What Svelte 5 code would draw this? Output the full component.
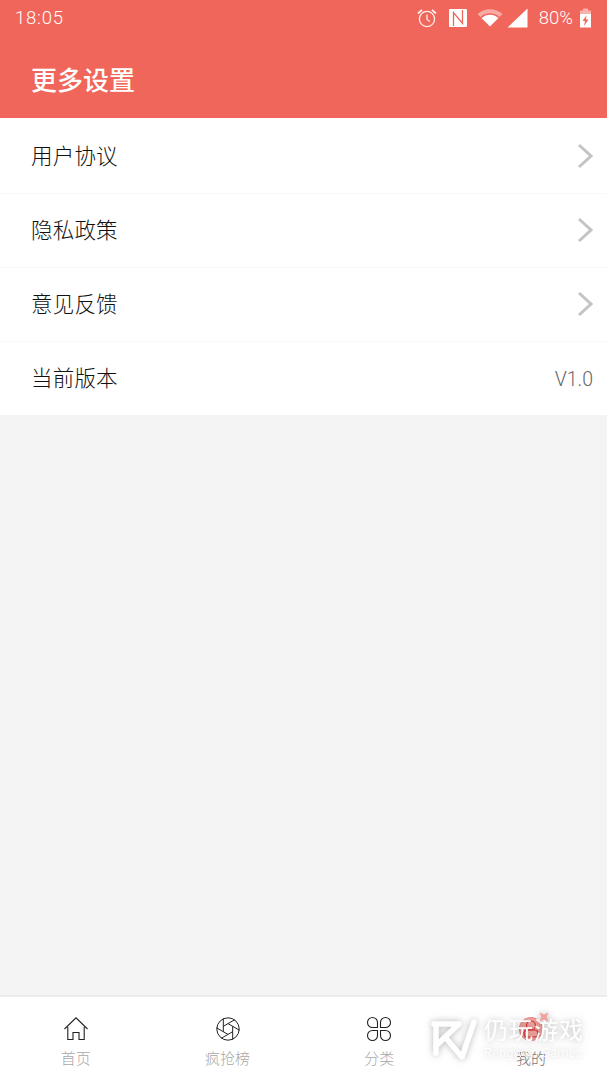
<script>
  const rows = [
    { label: '用户协议', arrow: true },
    { label: '隐私政策', arrow: true },
    { label: '意见反馈', arrow: true },
    { label: '当前版本', value: 'V1.0' }
  ]

  // aperture blades: each hexagon side carried on until it meets the outer ring
  const blades = [0, 1, 2, 3, 4, 5].map(i => {
    const a = (i * Math.PI) / 3 + Math.PI / 6
    const b = ((i + 1) * Math.PI) / 3 + Math.PI / 6
    const x1 = 13 + 5.4 * Math.cos(a)
    const y1 = 13 + 5.4 * Math.sin(a)
    const x2 = 13 + 5.4 * Math.cos(b)
    const y2 = 13 + 5.4 * Math.sin(b)
    const dx = (x2 - x1) / 5.4
    const dy = (y2 - y1) / 5.4
    return `M${x1.toFixed(2)} ${y1.toFixed(2)}L${(x1 + dx * 13.3).toFixed(2)} ${(y1 + dy * 13.3).toFixed(2)}`
  }).join('')
</script>

<div class="page">
  <header class="header">
    <div class="status">
      <span class="time">18:05</span>
      <div class="status-right">
        <svg class="alarm" width="22" height="22" viewBox="0 0 22 22" fill="none" stroke="#fff" stroke-width="1.3" opacity="0.9">
          <circle cx="11" cy="12" r="7.6" />
          <path d="M11 7.500V12.500L14 14.500" />
          <path d="M2 6.500L6 2.800M20 6.500L16 2.800" stroke-width="1.800" />
        </svg>
        <svg class="nfc" width="20" height="20" viewBox="0 0 20 20">
          <rect x="1" y="1" width="18" height="18" rx="1" fill="#fff" />
          <path d="M5.500 18V4.500L14.500 15.500V2" fill="none" stroke="#f0665a" stroke-width="1.300" />
        </svg>
        <svg class="wifi" width="26" height="20" viewBox="0 0 26 20">
          <path fill="#fff" opacity="0.45" d="M0.500 6C7.500 -0.500 18.500 -0.500 25.500 6L22.500 9C17 4 9 4 3.500 9Z" />
          <path fill="#fff" d="M4.500 10C9.500 5.500 16.500 5.500 21.500 10L13 18.500Z" />
        </svg>
        <svg class="signal" width="21" height="20" viewBox="0 0 21 20">
          <path fill="#fff" d="M20.500 0.500V19.500H0.500Z" />
        </svg>
        <span class="battery-text">80%</span>
        <svg class="battery" width="13" height="20" viewBox="0 0 13 20">
          <path fill="#fff" opacity="0.5" d="M4 0.500H9V2.500H12V6H1V2.500H4Z" />
          <path fill="#fff" d="M1 6H12V19.500H1ZM7.500 7.500L3.500 13H6L5 18L9.500 11.500H7Z" fill-rule="evenodd" />
        </svg>
      </div>
    </div>
    <h1 class="title">更多设置</h1>
  </header>

  <ul class="list">
    {#each rows as row}
      <li class="row">
        <span class="label">{row.label}</span>
        {#if row.arrow}
          <svg class="chevron" width="16" height="26" viewBox="0 0 16 26" fill="none" stroke="#c4c4c4" stroke-width="3">
            <path d="M2 2L14 13L2 24" />
          </svg>
        {:else}
          <span class="value">{row.value}</span>
        {/if}
      </li>
    {/each}
  </ul>

  <div class="spacer"></div>

  <nav class="tabbar">
    <div class="tab">
      <svg width="26" height="26" viewBox="0 0 26 26" fill="none" stroke="#222" stroke-width="1.100">
        <path d="M1.500 13L13 1.800L24.500 13M4.800 11V23.500H10V16.500H16V23.500H21.200V11" />
      </svg>
      <span>首页</span>
    </div>
    <div class="tab">
      <svg width="26" height="26" viewBox="0 0 26 26" fill="none" stroke="#222" stroke-width="1">
        <circle cx="13" cy="13" r="11.200" />
        <path d={blades} />
      </svg>
      <span>疯抢榜</span>
    </div>
    <div class="tab">
      <svg width="26" height="26" viewBox="0 0 26 26" fill="none" stroke="#222" stroke-width="1.100">
        <path d="M11.500 11.500H6.500A5 5 0 1 1 11.500 6.500ZM14.500 11.500H19.500A5 5 0 1 0 14.500 6.500ZM11.500 14.500H6.500A5 5 0 1 0 11.500 19.500ZM14.500 14.500H19.500A5 5 0 1 1 14.500 19.500Z" />
      </svg>
      <span>分类</span>
    </div>
    <div class="tab">
      <svg width="26" height="26" viewBox="0 0 26 26" fill="none" stroke="#d92f2f" stroke-width="1.200">
        <circle cx="13" cy="13" r="11.500" fill="#f2a5a1" stroke="#ec8f8a" />
        <circle cx="13" cy="9.500" r="4.500" />
        <rect x="6" y="14" width="14" height="7" rx="3.500" />
      </svg>
      <span class="me">我的</span>
    </div>
  </nav>

  <div class="watermark">
    <svg class="wm-logo" width="47" height="45" viewBox="0 0 47 45" fill="none" stroke="#fff" stroke-width="5.500" stroke-linejoin="round" stroke-linecap="round">
      <path d="M3 7H28L14 20L5 29V7" />
      <path d="M5 29V36" />
      <path d="M14 20L31 40L43 5" />
    </svg>
    <div class="wm-text">
      <span class="wm-cn">仍玩游戏</span>
      <span class="wm-en">Rengwan Games</span>
    </div>
    <svg class="wm-star" width="12" height="12" viewBox="0 0 16 16">
      <path fill="#f2a29d" d="M2 2L8 4.500L14 2L11.500 8L14 14L8 11.500L2 14L4.500 8Z" />
    </svg>
  </div>
</div>

<style>
  :global(body) {
    margin: 0;
    background: #f4f4f4;
  }

  .page {
    position: relative;
    display: flex;
    flex-direction: column;
    height: 1080px;
    font-family: "Noto Sans CJK SC", "Noto Sans", sans-serif;
    overflow: hidden;
  }

  .header {
    height: 118px;
    background: #f0665a;
    color: #fff;
    flex-shrink: 0;
  }

  .status {
    display: flex;
    align-items: center;
    justify-content: space-between;
    height: 36px;
    padding: 0 15px;
  }

  .time {
    font-family: Roboto, "Noto Sans", sans-serif;
    font-size: 18.500px;
    font-weight: 300;
    letter-spacing: 0.8px;
  }

  .status-right {
    display: flex;
    align-items: center;
  }

  .status-right svg {
    display: block;
  }

  .nfc {
    margin-left: 10px;
  }

  .wifi {
    margin-left: 9px;
  }

  .signal {
    margin-left: 4px;
  }

  .battery-text {
    margin-left: 11px;
    font-family: Roboto, "Noto Sans", sans-serif;
    font-size: 18.500px;
    font-weight: 300;
  }

  .battery {
    margin-left: 6px;
  }

  .title {
    margin: 0;
    padding: 25px 0 0 31px;
    font-size: 26px;
    font-weight: 500;
    line-height: 36px;
  }

  .list {
    list-style: none;
    margin: 0;
    padding: 1px 0 0;
    background: #fff;
    flex-shrink: 0;
  }

  .row {
    display: flex;
    align-items: center;
    justify-content: space-between;
    height: 74px;
    padding: 0 14px 0 31px;
    box-sizing: border-box;
  }

  .row + .row {
    border-top: 1px solid #f8f8f8;
  }

  .label {
    font-size: 21.500px;
    font-weight: 300;
    color: #111;
    letter-spacing: 0.2px;
    padding-bottom: 4px;
  }

  .value {
    font-family: Roboto, "Noto Sans", sans-serif;
    font-size: 19.500px;
    font-weight: 300;
    color: #666;
    padding-top: 2px;
  }

  .chevron {
    margin-top: -1px;
  }

  .spacer {
    flex: 1;
  }

  .tabbar {
    display: grid;
    grid-template-columns: repeat(4, 1fr);
    height: 83px;
    background: #fff;
    border-top: 2px solid #ececec;
    flex-shrink: 0;
  }

  .tab {
    display: flex;
    flex-direction: column;
    align-items: center;
    padding-top: 19px;
    color: #a8a8a8;
    font-size: 15px;
    font-weight: 300;
    line-height: 22px;
  }

  .tab svg {
    display: block;
    margin-bottom: 5px;
  }

  .me {
    color: #777;
  }

  .watermark {
    position: absolute;
    left: 431px;
    top: 1014px;
    display: flex;
    gap: 6px;
    pointer-events: none;
    filter: drop-shadow(0 0 3px rgba(0, 0, 0, 0.2)) drop-shadow(0 0 5px rgba(0, 0, 0, 0.1));
  }

  .wm-logo {
    margin-top: 3px;
  }

  .wm-text {
    display: flex;
    flex-direction: column;
    color: #fff;
  }

  .wm-cn {
    font-size: 24px;
    line-height: 30px;
    font-weight: 400;
    letter-spacing: 1px;
  }

  .wm-en {
    font-family: Roboto, "Noto Sans", sans-serif;
    font-size: 12.500px;
    line-height: 17px;
    font-weight: 300;
    letter-spacing: 0.4px;
    color: #fff;
  }

  .wm-star {
    position: absolute;
    left: 107px;
    top: -3px;
  }
</style>
